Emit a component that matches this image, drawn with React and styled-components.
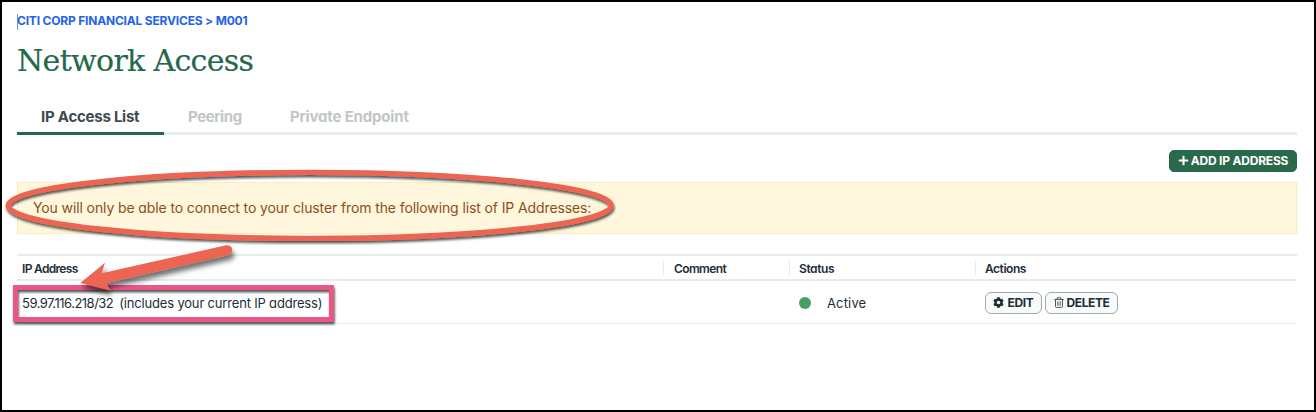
import React from 'react';
import styled, { createGlobalStyle } from 'styled-components';
import { FaCog, FaPlus } from 'react-icons/fa';

const GlobalStyle = createGlobalStyle`
  *, *::before, *::after { box-sizing: border-box; }
  body { margin: 0; background: #fff; }
`;

const Page = styled.main`
  position: relative;
  width: 1316px;
  height: 412px;
  padding: 9px 17px 0 15px;
  overflow: hidden;
  border: 2px solid #000;
  background: #fff;
  color: #1c2d38;
  font-family: Inter, "Liberation Sans", sans-serif;
  font-feature-settings: "cv11" 1;
  white-space: nowrap;
`;

const Breadcrumb = styled.nav`
  height: 20px;
  font-size: 12px;
  font-weight: 700;
  line-height: 20px;
  letter-spacing: -0.19px;
  color: #1f63e8;
`;

const Caret = styled.span`
  display: inline-block;
  width: 1px;
  height: 16px;
  margin-right: -1px;
  vertical-align: middle;
  background: #6f92d8;
`;

const Title = styled.h1`
  height: 44px;
  margin: 7px 0 0;
  font-family: "DejaVu Serif", serif;
  font-size: 30px;
  font-weight: 400;
  line-height: 45px;
  letter-spacing: -0.68px;
  color: #23694a;
  -webkit-text-stroke: 0.2px #23694a;
`;

const Tabs = styled.div`
  display: flex;
  height: 37px;
  margin-top: 16px;
  box-shadow: inset 0 -3px #e8edeb;
`;

const Tab = styled.div`
  width: ${(p) => p.$width}px;
  padding-left: 24px;
  font-size: 15px;
  font-weight: 700;
  line-height: 37px;
  letter-spacing: ${(p) => p.$spacing}px;
  color: ${(p) => (p.$active ? '#3d4a50' : '#c1c7c6')};
  box-shadow: ${(p) => (p.$active ? 'inset 0 -3px #23694a' : 'none')};
`;

const Toolbar = styled.div`
  display: flex;
  justify-content: flex-end;
  margin-top: 15px;
`;

const Button = styled.button`
  display: flex;
  align-items: center;
  justify-content: center;
  gap: ${(p) => (p.$primary ? 2 : 3)}px;
  width: ${(p) => p.$width}px;
  height: 22px;
  padding: 0 0 1px;
  border: 1px solid ${(p) => (p.$primary ? '#23694a' : '#a0aaab')};
  border-radius: ${(p) => (p.$primary ? 5 : 6)}px;
  background: ${(p) => (p.$primary ? '#2b694b' : '#f9fbfa')};
  color: ${(p) => (p.$primary ? '#fff' : '#1c2d38')};
  font: inherit;
  font-feature-settings: inherit;
  font-size: 12px;
  font-weight: 700;
  letter-spacing: ${(p) => p.$spacing}px;
  white-space: nowrap;
`;

const Notice = styled.div`
  height: 52px;
  margin-top: 10px;
  padding-left: 15px;
  border: 1px solid #fbeeb0;
  background: #fef6dd;
  color: #8c5017;
  font-size: 14px;
  line-height: 49px;
  letter-spacing: -0.11px;
`;

const columns = '646px 126px 186px 1fr';

const HeaderRow = styled.div`
  display: grid;
  grid-template-columns: ${columns};
  align-items: center;
  height: 27px;
  margin-top: 20px;
  border-top: 2px solid #e8edeb;
  border-bottom: 2px solid #e8edeb;
`;

const HeaderCell = styled.div`
  height: 16px;
  padding-left: ${(p) => (p.$first ? 5 : p.$pad)}px;
  border-left: ${(p) => (p.$first ? 'none' : '1px solid #e8edeb')};
  font-size: 12px;
  font-weight: 600;
  line-height: 17px;
  letter-spacing: ${(p) => p.$spacing}px;
`;

const Row = styled.div`
  display: grid;
  grid-template-columns: ${columns};
  align-items: center;
  height: 43px;
  padding-top: 2px;
  border-bottom: 1px solid #e8edeb;
`;

const Address = styled.div`
  display: flex;
  gap: 6px;
  padding-left: 5px;
  font-size: 13px;
  letter-spacing: -0.5px;
`;

const Note = styled.span`
  letter-spacing: -0.18px;
`;

const Status = styled.div`
  display: flex;
  align-items: center;
  gap: 16px;
  padding-left: 10px;
  font-size: 13px;
  letter-spacing: 0.15px;
`;

const Dot = styled.span`
  width: 12px;
  height: 12px;
  border-radius: 50%;
  background: #45a160;
`;

const Actions = styled.div`
  display: flex;
  gap: 3px;
  padding-left: 10px;
`;

const Annotations = styled.svg`
  position: absolute;
  top: -2px;
  left: -2px;
  pointer-events: none;
`;

const TrashIcon = () => (
  <svg width="10" height="11" viewBox="0 0 10 11" fill="none" stroke="#4c5960">
    <path d="M0.3 2.5h9.4M3.2 2.3V0.7h3.6v1.6M1.5 2.8v6.6q0 1 1 1h5q1 0 1-1V2.8" />
    <path d="M3.5 4.3v4.5M5 4.3v4.5M6.5 4.3v4.5" strokeWidth="0.7" />
  </svg>
);

export default function App() {
  return (
    <>
      <GlobalStyle />
      <Page>
        <Breadcrumb><Caret />CITI CORP FINANCIAL SERVICES &gt; M001</Breadcrumb>
        <Title>Network Access</Title>
        <Tabs>
          <Tab $active $width={147} $spacing={-0.24}>IP Access List</Tab>
          <Tab $width={102} $spacing={-0.4}>Peering</Tab>
          <Tab $width={167} $spacing={-0.17}>Private Endpoint</Tab>
        </Tabs>
        <Toolbar>
          <Button $primary $width={128} $spacing={-0.2}><FaPlus size={11} />ADD IP ADDRESS</Button>
        </Toolbar>
        <Notice>You will only be able to connect to your cluster from the following list of IP Addresses:</Notice>
        <HeaderRow>
          <HeaderCell $first $spacing={-0.68}>IP Address</HeaderCell>
          <HeaderCell $pad={10} $spacing={-0.62}>Comment</HeaderCell>
          <HeaderCell $pad={9} $spacing={-0.4}>Status</HeaderCell>
          <HeaderCell $pad={9} $spacing={-0.46}>Actions</HeaderCell>
        </HeaderRow>
        <Row>
          <Address><span>59.97.116.218/32</span><Note>(includes your current IP address)</Note></Address>
          <div />
          <Status><Dot />Active</Status>
          <Actions>
            <Button $width={57} $spacing={-0.3}><FaCog size={11} />EDIT</Button>
            <Button $width={73} $spacing={-0.4}><TrashIcon />DELETE</Button>
          </Actions>
        </Row>
        <Annotations width="1316" height="412" viewBox="0 0 1316 412">
          <defs>
            <filter id="thin" x="-5%" y="-20%" width="110%" height="140%">
              <feDropShadow dx="0.8" dy="2.4" stdDeviation="0.8" floodColor="#000" floodOpacity="0.65" />
            </filter>
            <filter id="wide" x="-20%" y="-40%" width="150%" height="200%">
              <feDropShadow dx="2" dy="5" stdDeviation="2.5" floodColor="#000" floodOpacity="0.55" />
            </filter>
          </defs>
          <rect x="15.5" y="287.5" width="316" height="32" fill="none" stroke="#e95788" strokeWidth="5" filter="url(#thin)" />
          <ellipse cx="309.7" cy="205.4" rx="301.5" ry="33" fill="none" stroke="#ec6552" strokeWidth="5.4" filter="url(#thin)" />
          <path d="M80.3 283L105 262.7L101.7 273.3L226 245.3A5 5 0 0 1 228.5 255L106 283.3L110.7 290.5Z" fill="#ec6552" filter="url(#wide)" />
        </Annotations>
      </Page>
    </>
  );
}
